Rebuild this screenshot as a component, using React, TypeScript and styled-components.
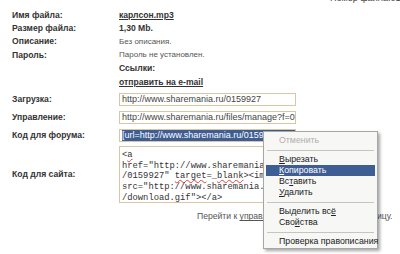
import React from 'react';
import styled, {createGlobalStyle, css} from 'styled-components';

/** Global */
const GlobalStyle = createGlobalStyle`
    html, body {
        margin: 0;
        padding: 0;
        background: #fff;
        overflow: hidden;
    }
    body {
        font-family: "Liberation Sans", Arial, sans-serif;
        color: #333;
    }
`;

/** Styles */
const Page = styled.div`
    position: relative;
    width: 400px;
    height: 254px;
    overflow: hidden;
    background: #fff;
`;

const FileNumber = styled.div`
    height: 4px;
    padding-left: 330px;
    font-size: 9px;
    line-height: 9px;
    margin-top: -6px;
    margin-bottom: 10px;
    white-space: nowrap;
    color: #444;
`;

const Table = styled.div`
    display: flex;
    flex-direction: column;
    padding-left: 12px;
`;

const Row = styled.div<{$h: number}>`
    display: grid;
    grid-template-columns: 107px 1fr;
    align-items: center;
    height: ${({$h}) => $h}px;
`;

const Label = styled.div`
    font-size: 8.6px;
    font-weight: bold;
    color: #333;
    white-space: nowrap;
`;

const Value = styled.div<{$bold?: boolean; $link?: boolean}>`
    font-size: ${({$bold}) => $bold ? '8.6px' : '8px'};
    font-weight: ${({$bold}) => $bold ? 'bold' : 'normal'};
    color: ${({$bold}) => $bold ? '#333' : '#555'};
    white-space: nowrap;
    ${({$link}) => $link && css`
        text-decoration: underline;
    `};
`;

const Field = styled.div`
    box-sizing: border-box;
    width: 177px;
    height: 13px;
    border: 1px solid #dac7a1;
    padding: 0 2px;
    font-size: 9px;
    line-height: 11px;
    color: #444;
    white-space: nowrap;
    overflow: hidden;
    background: #fff;
`;

const Selection = styled.span`
    background: #3e5d93;
    color: #fff;
    padding: 1px 0;
`;

const CodeArea = styled.div`
    box-sizing: border-box;
    width: 177px;
    height: 57px;
    border: 1px solid #dac7a1;
    padding: 3px 2px;
    font-family: "Liberation Mono", "Courier New", monospace;
    font-size: 8.8px;
    line-height: 10.8px;
    color: #333;
    white-space: pre;
    overflow: hidden;
`;

const Misspelled = styled.span`
    text-decoration: underline wavy #e04040;
    text-decoration-thickness: 1px;
    text-underline-offset: 1px;
`;

const Footer = styled.div`
    margin-top: 6px;
    padding-left: 197px;
    font-size: 8.6px;
    line-height: 12px;
    color: #555;
    white-space: nowrap;
    u {
        color: #555;
    }
`;

const Menu = styled.div`
    position: absolute;
    left: 263px;
    top: 131px;
    width: 115px;
    box-sizing: border-box;
    padding: 3px 2px 1px;
    background: #f7f7f5;
    border: 1px solid #a7a7a3;
    box-shadow: 2px 2px 3px rgba(0, 0, 0, .35);
    font-size: 8.8px;
`;

const MenuItem = styled.div<{$active?: boolean; $disabled?: boolean}>`
    height: 11px;
    line-height: 11px;
    padding-left: 13px;
    white-space: nowrap;
    color: ${({$disabled}) => $disabled ? '#b0b0ac' : '#222'};
    ${({$active}) => $active && css`
        background: #3e5d93;
        color: #fff;
    `};
    u {
        text-underline-offset: 1px;
    }
`;

const MenuSeparator = styled.div`
    height: 1px;
    margin: 4px 1px 3px;
    background: #c5c5c0;
`;

/** Data */
const infoRows = [
    {label: 'Имя файла:', value: 'карлсон.mp3', bold: true, link: true},
    {label: 'Размер файла:', value: '1,30 Mb.', bold: true},
    {label: 'Описание:', value: 'Без описания.'},
    {label: 'Пароль:', value: 'Пароль не установлен.'},
    {label: '', value: 'Ссылки:', bold: true},
    {label: '', value: 'отправить на e-mail', bold: true, link: true},
];

const linkRows = [
    {label: 'Загрузка:', value: 'http://www.sharemania.ru/0159927', h: 18},
    {label: 'Управление:', value: 'http://www.sharemania.ru/files/manage?f=0159927&code=a8e31', h: 18},
];

/**
 * Страница информации о загруженном файле
 */
const App: React.FC = () => {
    return <Page>
        <GlobalStyle/>
        <FileNumber>Номер файла:0159927</FileNumber>
        <Table>
            {infoRows.map((r, i) =>
                <Row $h={13.4} key={i}>
                    <Label>{r.label}</Label>
                    <Value $bold={r.bold} $link={r.link}>{r.value}</Value>
                </Row>
            )}
            <Row $h={2}/>
            {linkRows.map((r, i) =>
                <Row $h={r.h} key={i}>
                    <Label>{r.label}</Label>
                    <Field>{r.value}</Field>
                </Row>
            )}
            <Row $h={18}>
                <Label>Код для форума:</Label>
                <Field><Selection>[url=http://www.sharemania.ru/0159927][img]http://www.sharemania.ru/img/download.gif[/img][/url]</Selection></Field>
            </Row>
            <Row $h={60}>
                <Label>Код для сайта:</Label>
                <CodeArea>
                    {'<'}<Misspelled>a</Misspelled>{'\n'}
                    {'href="http://www.sharemania.ru\n'}
                    {'/0159927" '}<Misspelled>target</Misspelled>{'=_'}<Misspelled>blank</Misspelled>{'><img\n'}
                    {'src="http://www.sharemania.ru/img\n'}
                    {'/download.gif"></a>'}
                </CodeArea>
            </Row>
        </Table>
        <Footer>Перейти к <u>управлению файлом</u> или на страницу.</Footer>

        <Menu>
            <MenuItem $disabled>Отменить</MenuItem>
            <MenuSeparator/>
            <MenuItem><u>В</u>ырезать</MenuItem>
            <MenuItem $active><u>К</u>опировать</MenuItem>
            <MenuItem>Вс<u>т</u>авить</MenuItem>
            <MenuItem><u>У</u>далить</MenuItem>
            <MenuSeparator/>
            <MenuItem>Выделить вс<u>ё</u></MenuItem>
            <MenuItem>Сво<u>й</u>ства</MenuItem>
            <MenuSeparator/>
            <MenuItem>Проверка правописания</MenuItem>
        </Menu>
    </Page>;
};

export default App;
